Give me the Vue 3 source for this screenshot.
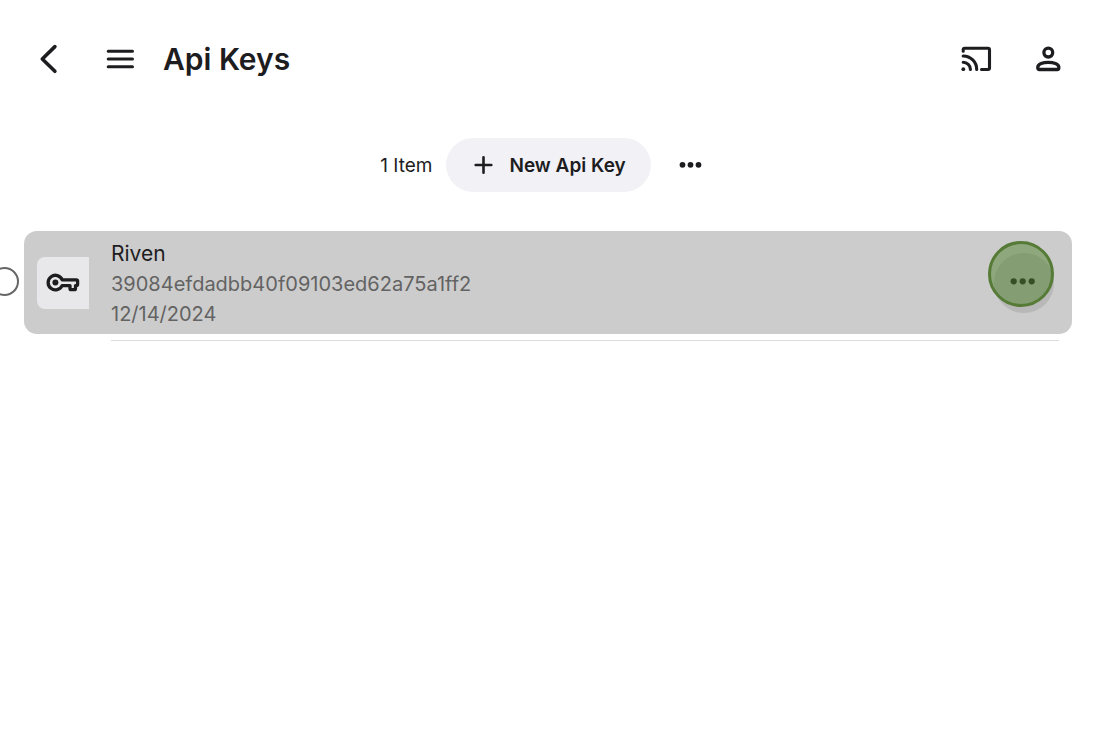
<script setup>
const items = [
  { name: 'Riven', token: '39084efdadbb40f09103ed62a75a1ff2', date: '12/14/2024' },
]
</script>

<template>
  <div class="page">
    <header class="bar">
      <button class="icon-btn" type="button" aria-label="Back">
        <svg viewBox="0 0 36 36"><path class="line back" d="M24.9 5.600 12.300 18l12.600 12.300" /></svg>
      </button>
      <button class="icon-btn" type="button" aria-label="Menu">
        <svg viewBox="0 0 36 36"><path class="line" d="M6.200 10.300h24.300M6.200 18h24.300M6.200 25.700h24.300" /></svg>
      </button>
      <h1 class="title">Api Keys</h1>
      <button class="icon-btn" type="button" aria-label="Cast">
        <svg viewBox="0 0 36 36">
          <path class="line cast" d="M5.200 10.300V8.700q0-1.500 1.500-1.500H30q1.500 0 1.500 1.500V27q0 1.500-1.500 1.500H23.500M5.200 15A13.500 13.500 0 0 1 18.700 28.500M5.200 21.300A7.200 7.200 0 0 1 12.400 28.500" />
          <circle cx="5.300" cy="28.200" r="1.900" />
        </svg>
      </button>
      <button class="icon-btn" type="button" aria-label="Profile">
        <svg viewBox="0 0 36 36">
          <circle class="line bold" cx="18.300" cy="11.600" r="4.400" />
          <path class="line bold" d="M7.800 27v-.8c0-3.200 5.300-4.900 10.500-4.900s10.500 1.700 10.500 4.900v.8q0 1.500-1.500 1.500H9.300q-1.500 0-1.500-1.500Z" />
        </svg>
      </button>
    </header>

    <main class="content">
      <div class="toolbar">
        <span class="count">1 Item</span>
        <button class="new-btn" type="button">
          <svg viewBox="0 0 24 24"><path class="line thin" d="M12.500 4.200v15.600M4.700 12h15.600" /></svg>
          New Api Key
        </button>
        <button class="more-btn" type="button" aria-label="More">
          <svg viewBox="0 0 28 28"><circle cx="6.500" cy="13.800" r="2.900" /><circle cx="14.500" cy="13.800" r="2.900" /><circle cx="22.500" cy="13.800" r="2.900" /></svg>
        </button>
      </div>

      <ul class="list">
        <li v-for="item in items" :key="item.token" class="item">
          <input class="pick" type="checkbox" :aria-label="'Select ' + item.name">
          <div class="row">
            <div class="thumb">
              <svg viewBox="0 0 36 36">
                <path class="line bold" d="M17.200 14.800H31.300q1.300 0 1.300 1.300V19.300q0 1.300-1.300 1.300H30.500V23.500q0 1.200-1.200 1.200H26.200q-1.200 0-1.200-1.200V20.600H17.100A7.300 7.300 0 1 1 17.200 14.800Z" />
                <circle cx="10.400" cy="17.600" r="3" />
              </svg>
            </div>
            <div class="text">
              <div class="name">{{ item.name }}</div>
              <div class="sub">{{ item.token }}</div>
              <div class="sub">{{ item.date }}</div>
            </div>
            <button class="row-more" type="button" :aria-label="'Options for ' + item.name">
              <svg viewBox="0 0 28 28"><circle cx="3.700" cy="12.300" r="3.100" /><circle cx="12.700" cy="12.300" r="3.100" /><circle cx="21.700" cy="12.300" r="3.100" /></svg>
              <span class="touch"></span>
            </button>
          </div>
        </li>
      </ul>
    </main>
  </div>
</template>

<style>
body { background: #fff; }
</style>

<style scoped>
.page {
  font-family: Inter, "Liberation Sans", sans-serif;
  color: #1d1d1f;
  overflow: hidden;
}
button {
  border: 0;
  padding: 0;
  background: none;
  color: inherit;
  font: inherit;
}
svg { display: block; fill: #1d1d1f; }
.line {
  fill: none;
  stroke: #1d1d1f;
  stroke-width: 3;
  stroke-linecap: round;
  stroke-linejoin: round;
}
.back { stroke-width: 3.6; }
.bold { stroke-width: 3.3; }
.cast { stroke-width: 3.1; }
.thin { stroke-width: 2.6; }
.bar {
  display: flex;
  align-items: center;
  gap: 36px;
  padding: 41px 54px 0 30px;
}
.icon-btn { width: 36px; height: 36px; }
.title {
  flex: 1;
  margin: 0 0 0 -11px;
  font-size: 30px;
  line-height: 36px;
  font-weight: 600;
}
.content { padding: 61px 48px 0 24px; }
.toolbar {
  display: flex;
  justify-content: center;
  align-items: center;
  font-size: 19px;
}
.count { margin-right: 13px; }
.new-btn {
  display: flex;
  align-items: center;
  gap: 15px;
  height: 54px;
  padding: 0 25px;
  border-radius: 27px;
  background: #f2f1f6;
  font-weight: 600;
}
.new-btn svg { width: 24px; height: 24px; }
.more-btn {
  display: grid;
  place-items: center;
  width: 52px;
  height: 54px;
  margin-left: 13px;
}
.more-btn svg { width: 28px; height: 28px; }
.list { list-style: none; margin: 39px 0 0; padding: 0; }
.item { position: relative; }
.item::after {
  content: "";
  display: block;
  height: 1px;
  margin: 6px 13px 0 87px;
  background: #dcdcdc;
}
.pick {
  position: absolute;
  left: -34px;
  top: 36px;
  width: 29px;
  height: 29px;
  margin: 0;
  appearance: none;
  border: 2px solid #666;
  border-radius: 50%;
  background: #fff;
}
.row {
  display: flex;
  align-items: center;
  gap: 22px;
  padding: 6px 18px 5px 13px;
  border-radius: 13px;
  background: #ccc;
}
.thumb {
  display: grid;
  place-items: center;
  width: 52px;
  height: 52px;
  border-radius: 8px 0 0 8px;
  background: #e8e8ea;
}
.thumb svg { width: 36px; height: 36px; }
.text {
  flex: 1;
  padding-top: 2px;
  font-size: 20px;
  line-height: 30px;
}
.name { font-size: 21px; }
.sub { color: #636363; }
.row-more {
  position: relative;
  display: grid;
  place-items: center;
  width: 60px;
  height: 60px;
  border-radius: 50%;
  background: #b8b8b8;
}
.row-more svg { width: 28px; height: 28px; }
.touch {
  position: absolute;
  left: -6px;
  top: -12px;
  width: 60px;
  height: 60px;
  border: 3px solid #567b36;
  border-radius: 50%;
  background: rgba(80, 130, 45, 0.5);
}
</style>
